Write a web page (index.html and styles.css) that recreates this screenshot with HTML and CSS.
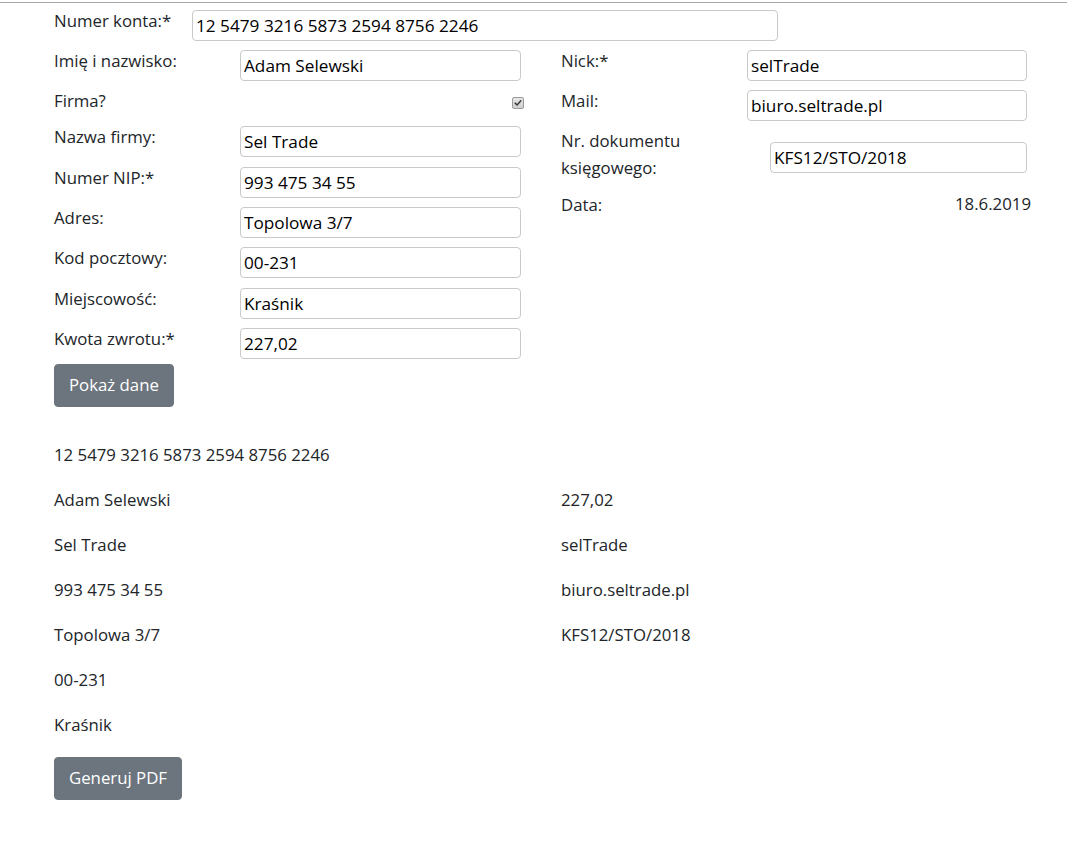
FILE: index.html
```html
<!DOCTYPE html>
<html lang="pl">
<head>
<meta charset="utf-8">
<title>Zwrot</title>
<link rel="stylesheet" href="styles.css">
</head>
<body>
<div class="page">
  <form class="form">
    <div class="field field-top">
      <label class="lbl lbl-top">Numer konta:*</label>
      <input class="inp inp-top" type="text" value="12 5479 3216 5873 2594 8756 2246">
    </div>
    <div class="cols">
      <div class="col">
        <div class="field"><label class="lbl">Imię i nazwisko:</label><input class="inp" type="text" value="Adam Selewski"></div>
        <div class="field"><label class="lbl">Firma?</label><span class="chk-wrap"><span class="chk"><svg viewBox="0 0 12 12" width="12" height="12"><path d="M2.6 6.2 L4.9 8.4 L9.4 3.4" fill="none" stroke="#3a3a3a" stroke-width="1.8" stroke-linecap="round" stroke-linejoin="round"/></svg></span></span></div>
        <div class="field"><label class="lbl">Nazwa firmy:</label><input class="inp" type="text" value="Sel Trade"></div>
        <div class="field"><label class="lbl">Numer NIP:*</label><input class="inp" type="text" value="993 475 34 55"></div>
        <div class="field"><label class="lbl">Adres:</label><input class="inp" type="text" value="Topolowa 3/7"></div>
        <div class="field"><label class="lbl">Kod pocztowy:</label><input class="inp" type="text" value="00-231"></div>
        <div class="field"><label class="lbl">Miejscowość:</label><input class="inp" type="text" value="Kraśnik"></div>
        <div class="field"><label class="lbl">Kwota zwrotu:*</label><input class="inp" type="text" value="227,02"></div>
      </div>
      <div class="col">
        <div class="field"><label class="lbl">Nick:*</label><input class="inp" type="text" value="selTrade"></div>
        <div class="field"><label class="lbl">Mail:</label><input class="inp" type="text" value="biuro.seltrade.pl"></div>
        <div class="field field-doc"><label class="lbl lbl-doc">Nr. dokumentu księgowego:</label><input class="inp inp-doc" type="text" value="KFS12/STO/2018"></div>
        <div class="field"><label class="lbl">Data:</label><span class="date">18.6.2019</span></div>
      </div>
    </div>
    <button class="btn btn-show" type="button">Pokaż dane</button>
  </form>
  <div class="output">
    <p class="out">12 5479 3216 5873 2594 8756 2246</p>
    <div class="out-cols">
      <div class="out-col">
        <p class="out">Adam Selewski</p>
        <p class="out">Sel Trade</p>
        <p class="out">993 475 34 55</p>
        <p class="out">Topolowa 3/7</p>
        <p class="out">00-231</p>
        <p class="out">Kraśnik</p>
      </div>
      <div class="out-col">
        <p class="out">227,02</p>
        <p class="out">selTrade</p>
        <p class="out">biuro.seltrade.pl</p>
        <p class="out">KFS12/STO/2018</p>
      </div>
    </div>
    <button class="btn" type="button">Generuj PDF</button>
  </div>
</div>
</body>
</html>
```
FILE: styles.css
```css
html, body {
  margin: 0;
  padding: 0;
  background: #fff;
}
body {
  padding-top: 2px;
  font-family: "Open Sans", "Noto Sans", sans-serif;
  font-size: 16.8px;
  color: #212529;
}
.page {
  border-top: 1px solid #a9a9a9;
  padding-left: 54px;
  padding-top: 6.5px;
}
.form {
  margin: 0;
}
.field {
  display: flex;
  align-items: flex-start;
  margin-bottom: 9.3px;
}
.lbl {
  flex: 0 0 186px;
  line-height: 27px;
  font-size: 16.8px;
  margin-top: -3px;
  margin-bottom: 3px;
}
.lbl-top {
  flex-basis: 138px;
}
.inp {
  flex: 1 1 auto;
  min-width: 0;
  box-sizing: border-box;
  height: 31px;
  margin: 0;
  padding: 0 3px;
  border: 1px solid #c9c9c9;
  border-radius: 4px;
  font-family: "Open Sans", "Noto Sans", sans-serif;
  font-size: 17.2px;
  color: #000;
  background: #fff;
}
.inp-top {
  flex: 0 0 586px;
}
.cols {
  display: grid;
  grid-template-columns: 467px 466px;
  column-gap: 40px;
}
.col .field:last-child {
  margin-bottom: 0;
}
.field-doc {
  align-items: center;
}
.lbl-doc {
  flex-basis: 209px;
  margin-top: -3px;
  margin-bottom: 3px;
}
.chk-wrap {
  flex: 1 1 auto;
  display: flex;
  justify-content: flex-end;
  padding-top: 7px;
  margin-right: -3px;
}
.chk {
  display: flex;
  align-items: center;
  justify-content: center;
  box-sizing: border-box;
  width: 12px;
  height: 12px;
  border: 1px solid #9a9a9a;
  border-radius: 2px;
  background: linear-gradient(#e6e6e6, #cfcfcf);
}
.chk svg {
  width: 10px;
  height: 10px;
}
.date {
  flex: 1 1 auto;
  text-align: right;
  line-height: 27px;
  margin-top: -4px;
  margin-right: -4px;
}
.btn {
  display: block;
  box-sizing: border-box;
  height: 43px;
  padding: 0 14px;
  border: 1px solid #6c757d;
  border-radius: 4px;
  background: #6c757d;
  color: #fff;
  font-family: "Open Sans", "Noto Sans", sans-serif;
  font-size: 16.8px;
  line-height: 26px;
}
.btn-show {
  margin-top: 5px;
}
.output {
  margin-top: 35px;
}
.out {
  margin: 0 0 18.6px;
  line-height: 26.4px;
}
.out-cols {
  display: grid;
  grid-template-columns: 467px 466px;
  column-gap: 40px;
}
```
